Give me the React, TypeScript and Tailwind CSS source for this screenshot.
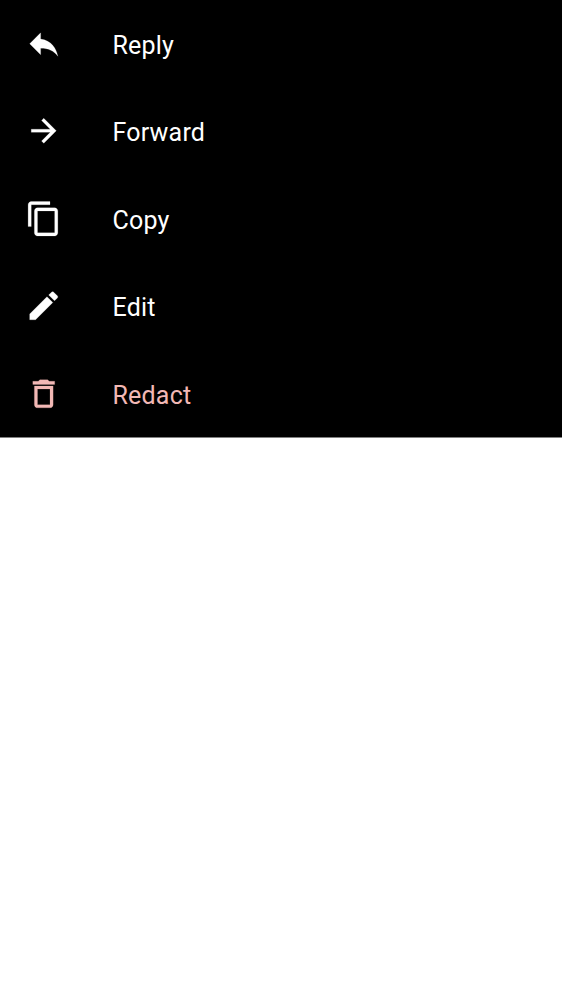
import React from "react";

const items = [
  { label: "Reply", color: "text-white", path: "M10 9V5l-7 7 7 7v-4.1c5 0 8.500 1.600 11 5.100-1-5-4-10-11-11z" },
  { label: "Forward", color: "text-white", path: "M12 4l-1.410 1.410L16.170 11H4v2h12.170l-5.580 5.590L12 20l8-8z" },
  { label: "Copy", color: "text-white", path: "M16 1H4c-1.100 0-2 .9-2 2v14h2V3h12V1zm3 4H8c-1.100 0-2 .9-2 2v14c0 1.100.9 2 2 2h11c1.100 0 2-.9 2-2V7c0-1.100-.9-2-2-2zm0 16H8V7h11v14z" },
  { label: "Edit", color: "text-white", path: "M3 17.250V21h3.750L17.810 9.940l-3.750-3.750L3 17.250zM20.710 7.040c.39-.39.39-1.020 0-1.410l-2.340-2.340c-.39-.39-1.020-.39-1.410 0l-1.830 1.830 3.750 3.750 1.830-1.830z" },
  { label: "Redact", color: "text-[#f2b8b5]", path: "M16 9v10H8V9h8m-1.500-6h-5l-1 1H5v2h14V4h-3.500l-1-1zM18 7H6v12c0 1.100.9 2 2 2h8c1.100 0 2-.9 2-2V7z" },
];

export default function App() {
  return (
    <main className="h-[1000px] w-[562px] overflow-hidden bg-white">
      <ul className="flex h-[438px] flex-col border-b border-[#808080] bg-black font-['Roboto',sans-serif]">
        {items.map((item) => (
          <li key={item.label} className={`flex h-[87.5px] shrink-0 items-center pl-[25px] ${item.color}`}>
            <svg className="mb-px size-[37.5px] shrink-0" viewBox="0 0 24 24" fill="currentColor" stroke="currentColor" strokeWidth="0.12" aria-hidden="true">
              <path d={item.path} />
            </svg>
            <span className="ml-[50px] pt-[3px] text-[25px] leading-[37.5px] tracking-[0.2px]">{item.label}</span>
          </li>
        ))}
      </ul>
    </main>
  );
}
